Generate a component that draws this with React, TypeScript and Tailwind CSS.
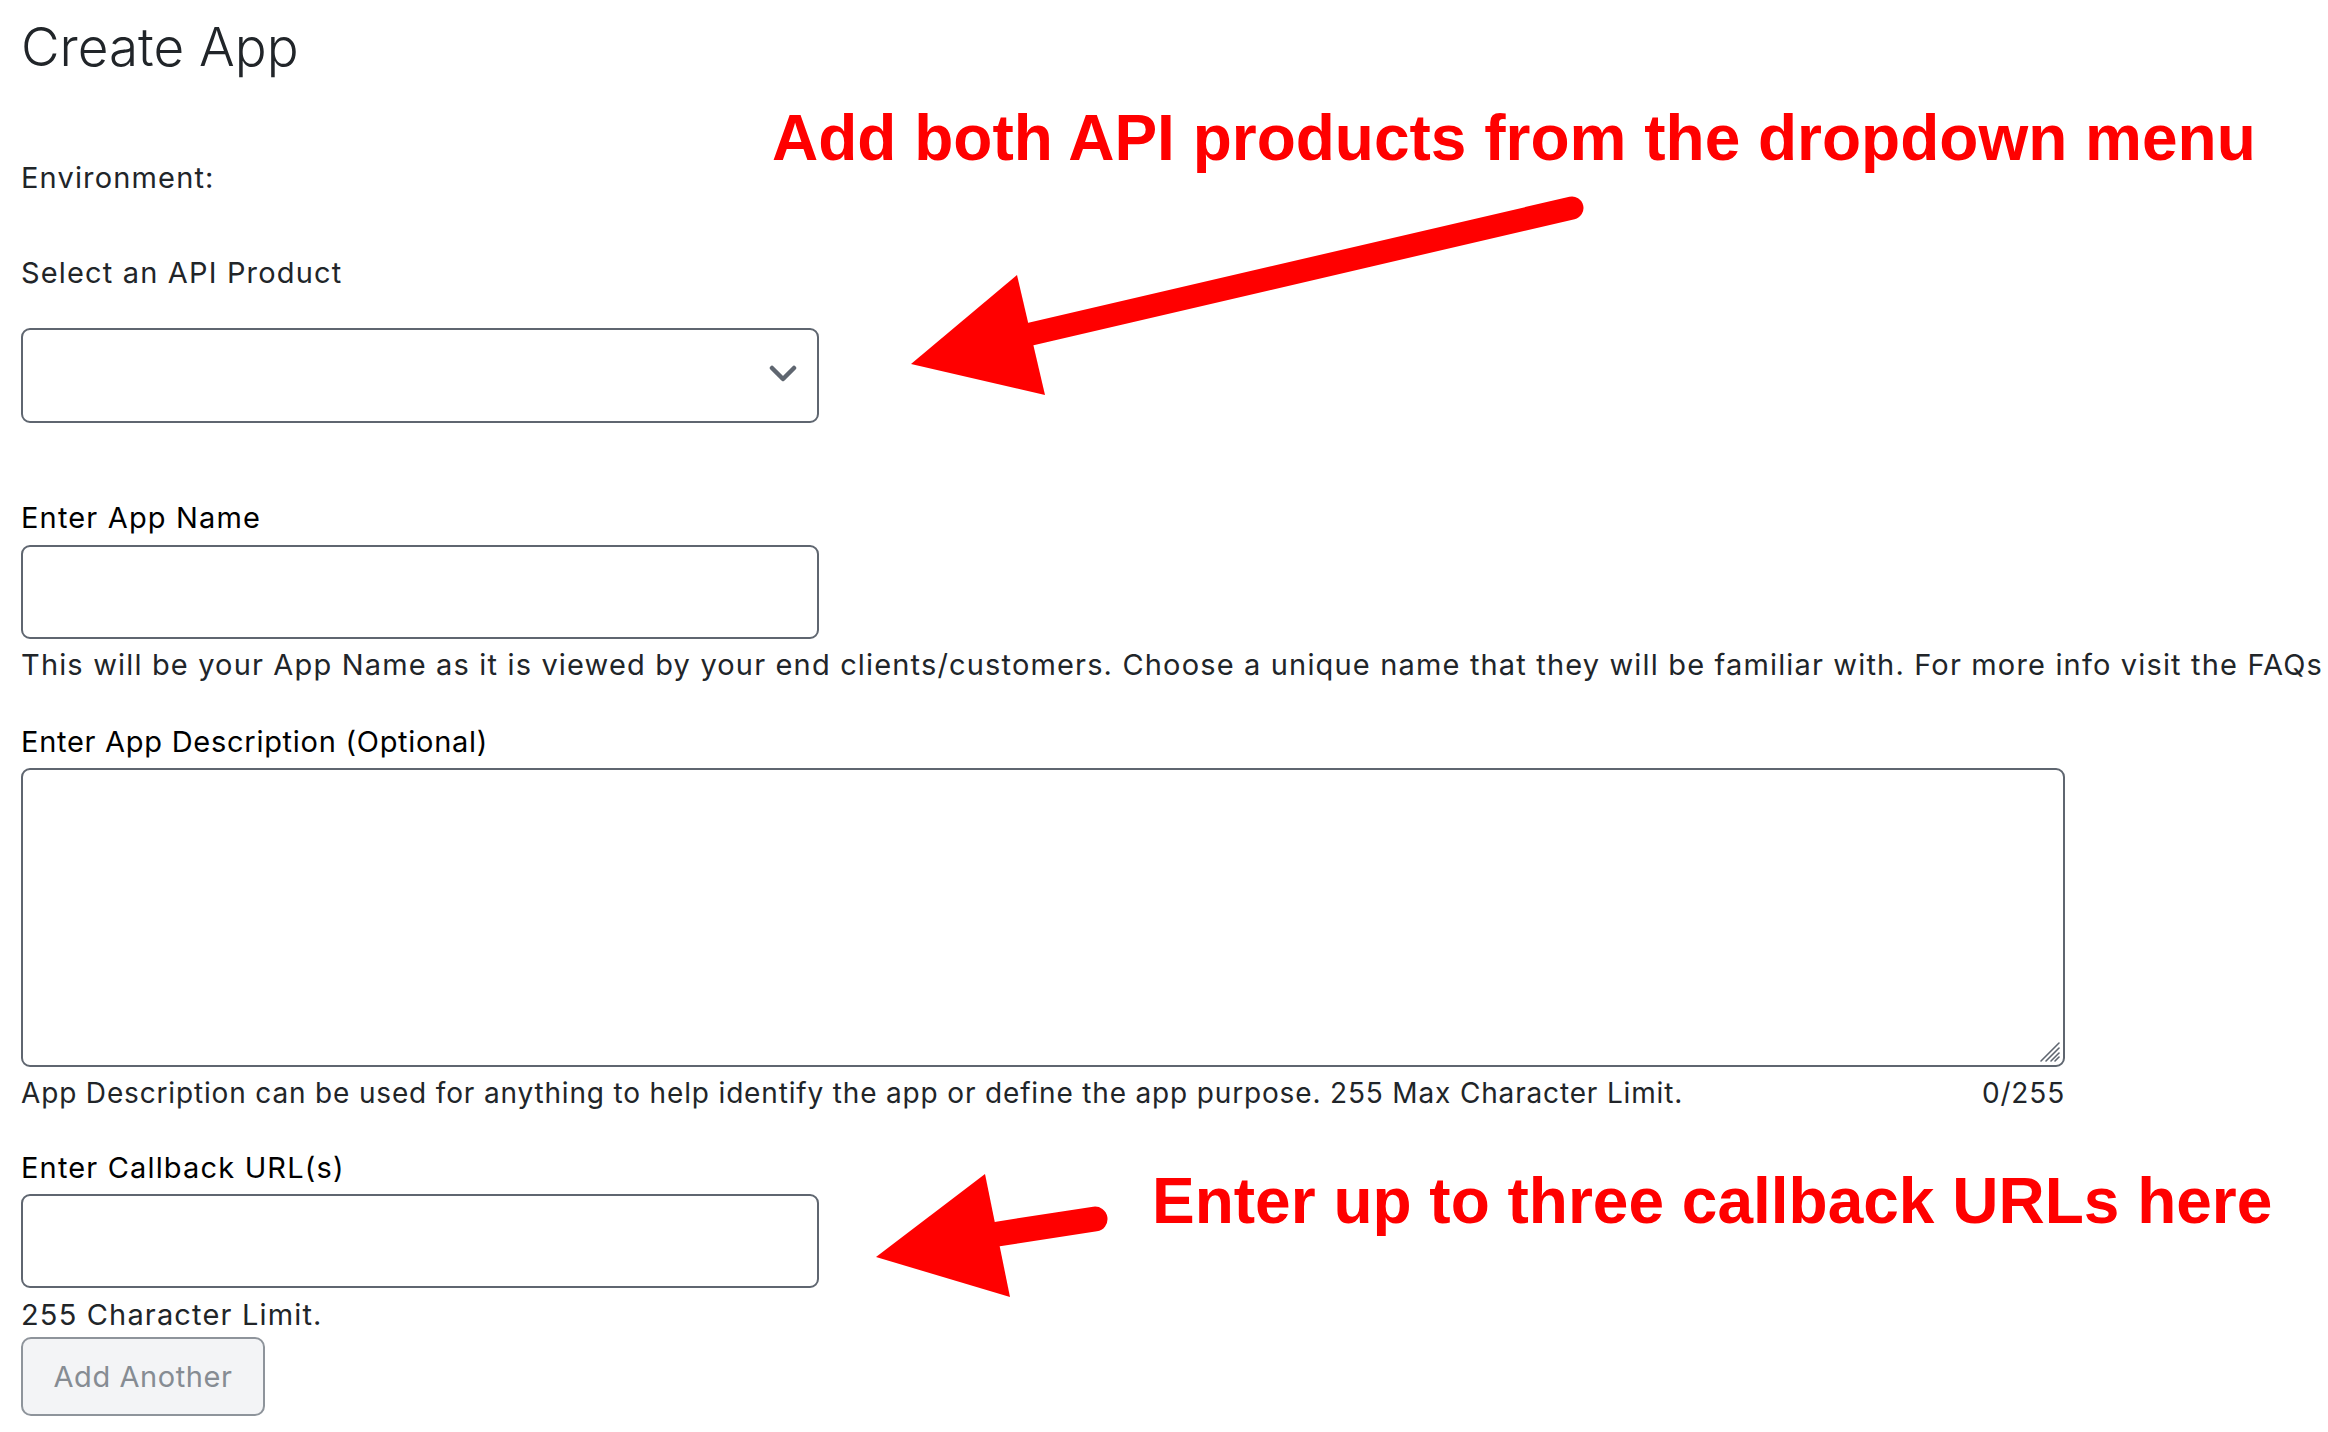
import React from 'react';

const text = "text-[29px] leading-[36px] tracking-[0.04em]";
const label = `block ${text} text-black`;
const help = `block ${text} text-[#212529]`;
const box = "block w-[798px] rounded-[9px] border-2 border-[#5f6670] bg-white";

function Arrows() {
  return (
    <svg
      className="pointer-events-none absolute left-0 top-0"
      width="2328"
      height="1432"
      viewBox="0 0 2328 1432"
    >
      <line x1="1031" y1="334" x2="1572" y2="208" stroke="#ff0000" strokeWidth="23" strokeLinecap="round" />
      <polygon points="911,364 1017,275 1045,395" fill="#ff0000" />
      <line x1="998" y1="1234" x2="1095" y2="1219" stroke="#ff0000" strokeWidth="25" strokeLinecap="round" />
      <polygon points="876,1257 985,1174 1010,1297" fill="#ff0000" />
    </svg>
  );
}

export default function App() {
  return (
    <div className="relative min-h-screen w-[2328px] bg-white font-['Inter',sans-serif] text-[#212529]">
      <div className="pl-[21px] pt-[15px] pb-[16px]">
        <h1 className="text-[53px] font-light leading-[64px] text-[#212529]">Create App</h1>

        <div className={`mt-[81px] ${text}`}>Environment:</div>

        <div className={`mt-[59px] ${text}`}>Select an API Product</div>
        <div className={`${box} mt-[37px] h-[95px] relative`}>
          <svg className="absolute right-[20px] top-[35px]" width="28" height="18" viewBox="0 0 28 18">
            <path d="M3 3 L14 14 L25 3" fill="none" stroke="#5f6670" strokeWidth="4.5" strokeLinecap="round" strokeLinejoin="round" />
          </svg>
        </div>

        <label className={`${label} mt-[77px]`}>Enter App Name</label>
        <input type="text" className={`${box} mt-[9px] h-[94px] px-4 text-[28px] outline-none`} />
        <span className={`${help} mt-[8px] whitespace-nowrap`}>
          This will be your App Name as it is viewed by your end clients/customers. Choose a unique name that they will be familiar with. For more info visit the FAQs
        </span>

        <label className="mt-[41px] block text-[29px] leading-[36px] tracking-[0.025em] text-black">Enter App Description (Optional)</label>
        <div className="relative mt-[8px] w-[2044px]">
          <textarea className="block h-[299px] w-full resize-none rounded-[9px] border-2 border-[#5f6670] bg-white p-4 text-[28px] outline-none" />
          <svg className="pointer-events-none absolute bottom-[4px] right-[4px]" width="22" height="22" viewBox="0 0 22 22">
            <g stroke="#5f6670" strokeWidth="1.6" strokeLinecap="round">
              <line x1="2" y1="20" x2="20" y2="2" />
              <line x1="7" y1="20" x2="20" y2="7" />
              <line x1="12" y1="20" x2="20" y2="12" />
              <line x1="16" y1="20" x2="20" y2="16" />
            </g>
          </svg>
        </div>
        <div className="mt-[8px] flex w-[2044px] justify-between text-[28px] leading-[36px] tracking-[0.03em]">
          <span>App Description can be used for anything to help identify the app or define the app purpose. 255 Max Character Limit.</span>
          <span>0/255</span>
        </div>

        <label className={`${label} mt-[39px]`}>Enter Callback URL(s)</label>
        <input type="text" className={`${box} mt-[8px] h-[94px] px-4 text-[28px] outline-none`} />
        <span className={`${help} mt-[9px]`}>255 Character Limit.</span>
        <button
          type="button"
          className="mt-[4px] block h-[79px] w-[244px] rounded-[10px] border-2 border-[#8e949b] bg-[#f3f4f6] text-[29px] tracking-[0.02em] text-[#868c93]"
        >
          Add Another
        </button>
      </div>

      <div className="absolute left-[772px] top-[106px] font-['Liberation_Sans',Arial,sans-serif] text-[64px] font-bold leading-none text-[#ff0000] whitespace-nowrap">
        Add both API products from the dropdown menu
      </div>
      <div className="absolute left-[1152px] top-[1169px] font-['Liberation_Sans',Arial,sans-serif] text-[64px] font-bold leading-none text-[#ff0000] whitespace-nowrap">
        Enter up to three callback URLs here
      </div>
      <Arrows />
    </div>
  );
}
